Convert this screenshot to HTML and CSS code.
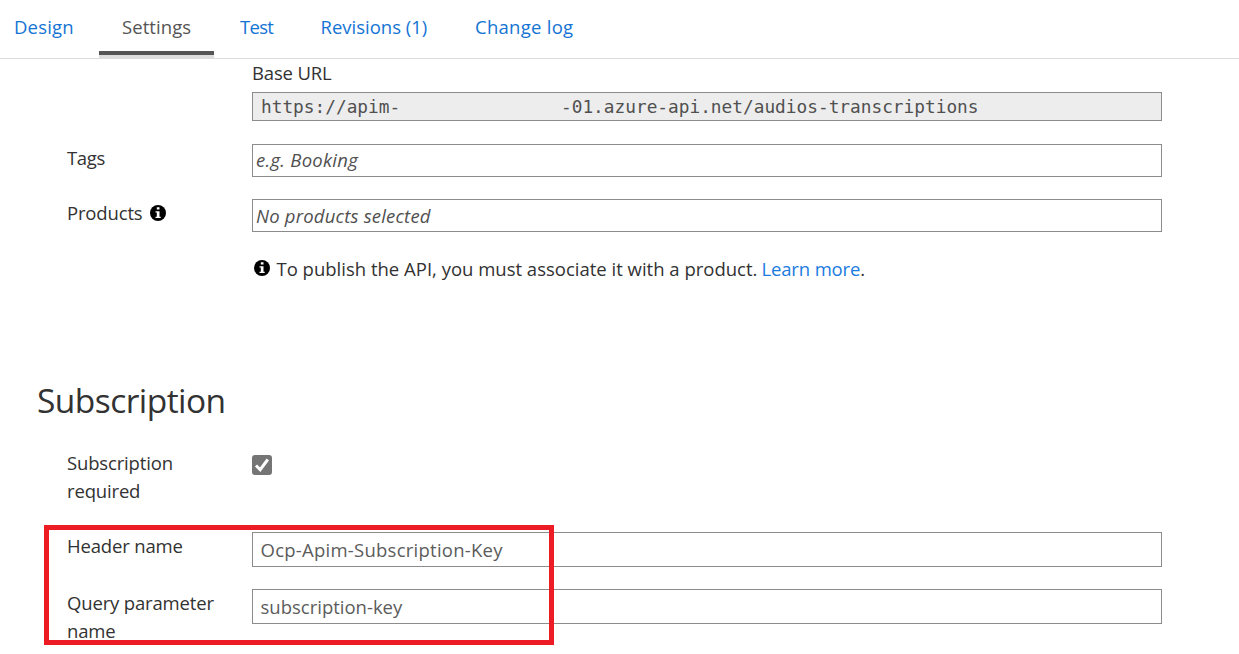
FILE: index.html
```html
<!DOCTYPE html>
<html lang="en">
<head>
<meta charset="utf-8">
<title>API settings</title>
<link rel="stylesheet" href="styles.css">
</head>
<body>
<nav class="tabs">
  <a class="tab tab-design">Design</a>
  <a class="tab tab-settings">Settings</a>
  <a class="tab tab-test">Test</a>
  <a class="tab tab-revisions">Revisions (1)</a>
  <a class="tab tab-log">Change log</a>
</nav>
<main class="form">
  <div class="base-label">Base URL</div>
  <div class="field field-url"><span class="url-start">https://apim-</span><span>-01.azure-api.net/audios-transcriptions</span></div>
  <div class="row row-tags">
    <div class="label label-tags">Tags</div>
    <div class="field field-pick pick-tags">e.g. Booking</div>
  </div>
  <div class="row row-products">
    <div class="label label-products"><span>Products</span><svg class="info" viewBox="0 0 16 16"><circle cx="8" cy="8" r="8"/><path d="M6.8 2.3h2.7v2.3H6.8zM5.5 6.2h4v5.6h1.2V13H5.5v-1.2h1.3V7.4H5.5z" fill="#fff"/></svg></div>
    <div class="field field-pick">No products selected</div>
  </div>
  <div class="note"><svg class="info" viewBox="0 0 16 16"><circle cx="8" cy="8" r="8"/><path d="M6.8 2.3h2.7v2.3H6.8zM5.5 6.2h4v5.6h1.2V13H5.5v-1.2h1.3V7.4H5.5z" fill="#fff"/></svg><span class="note-text">To publish the API, you must associate it with a product.</span><a class="link">Learn more</a><span>.</span></div>
  <h2 class="heading">Subscription</h2>
  <div class="row row-required">
    <div class="label">Subscription<br>required</div>
    <svg class="check" viewBox="0 0 20 20"><rect width="20" height="20" rx="3" fill="#757575"/><path d="M4 10.5l4.2 4.2L15.8 4.5" fill="none" stroke="#fff" stroke-width="3"/></svg>
  </div>
  <div class="row row-header">
    <div class="label">Header name</div>
    <div class="field field-text text-header">Ocp-Apim-Subscription-Key</div>
  </div>
  <div class="row row-query">
    <div class="label">Query parameter<br>name</div>
    <div class="field field-text">subscription-key</div>
  </div>
</main>
<div class="highlight"></div>
</body>
</html>
```
FILE: styles.css
```css
* { box-sizing: border-box; }

body {
  margin: 0;
  width: 1239px;
  height: 654px;
  overflow: hidden;
  position: relative;
  background: #fff;
  color: #323232;
  font: 18.5px/28px "Open Sans", "Noto Sans", sans-serif;
}

.tabs { display: flex; height: 59px; border-bottom: 1px solid #ddd; padding-top: 13px; color: #1474d4; }
.tab { flex: none; white-space: nowrap; }
.tab-design { width: 99px; padding-left: 14px; letter-spacing: .2px; }
.tab-settings { width: 115px; height: 42px; padding-left: 23px; color: #555; border-bottom: 4px solid #555; box-shadow: 0 3px #ddd; letter-spacing: .08px; }
.tab-test { width: 81px; padding-left: 26px; letter-spacing: -.7px; }
.tab-revisions { width: 155px; padding-left: 25.5px; }
.tab-log { padding-left: 25px; letter-spacing: .27px; }

.base-label { margin-left: 252px; height: 33px; letter-spacing: -.15px; }

.field { border: 1px solid #8c8c8c; color: #505050; white-space: nowrap; }
.field-url { display: flex; margin-left: 252px; width: 910px; height: 29px; background: #ededed; padding-left: 8px; font: 17.8px/27px "DejaVu Sans Mono", monospace; }
.url-start { width: 300px; }

.row { display: grid; grid-template-columns: 185px 910px; margin-left: 67px; align-items: start; }
.row-tags { margin-top: 23px; height: 55px; }
.row-products { height: 56px; }
.label { letter-spacing: -.16px; white-space: nowrap; }
.label-tags { letter-spacing: -.35px; }
.label-products { display: flex; gap: 7.5px; }
.field-pick { height: 33px; padding-left: 3px; font-style: italic; line-height: 32px; letter-spacing: .2px; }
.pick-tags { line-height: 30px; letter-spacing: .27px; }

.info { flex: none; width: 16px; height: 16px; margin-top: 5.5px; }
.note { display: flex; margin-left: 254px; height: 28px; white-space: nowrap; }
.note .info { margin-top: 5px; }
.note-text { width: 491.5px; padding-left: 6.5px; }
.link { color: #1a7be0; letter-spacing: -.15px; }

.heading { margin: 94px 0 0 37px; font-size: 33.5px; font-weight: 400; line-height: 47px; height: 48px; letter-spacing: -.55px; }

.row-required { margin-top: 24px; height: 83px; }
.check { width: 20px; height: 20px; margin-top: 5.5px; }
.row-header { height: 57px; }
.field-text { height: 35px; padding-left: 7.5px; line-height: 34px; color: #5c5c5c; }
.text-header { letter-spacing: .25px; }

.highlight { position: absolute; left: 44px; top: 525px; width: 510px; height: 120px; border: 5px solid #ed1c24; }
```
